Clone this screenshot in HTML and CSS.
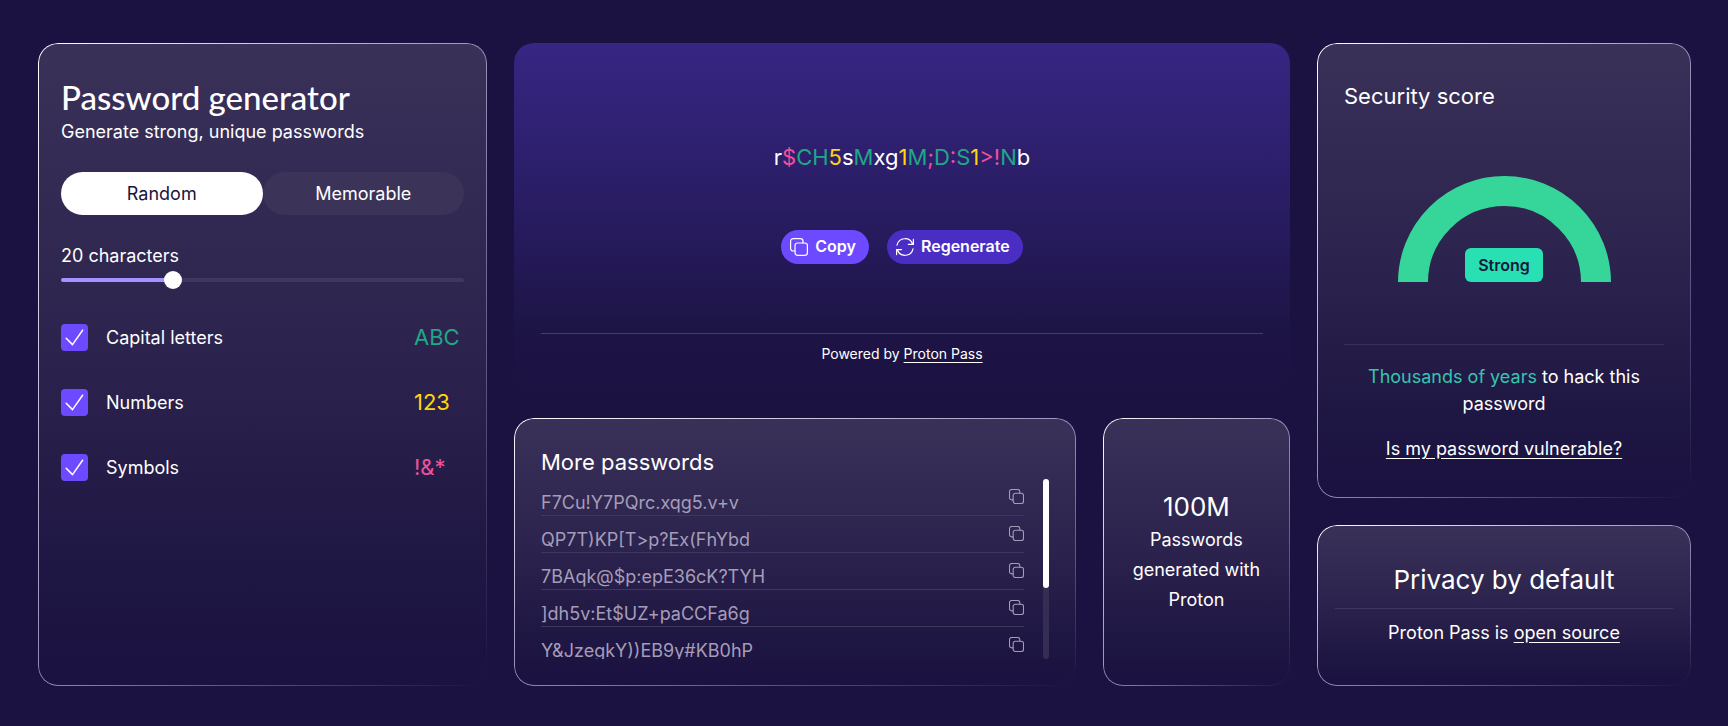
FILE: index.html
```html
<!DOCTYPE html>
<html lang="en">
<head>
    <meta charset="UTF-8">
    <meta name="viewport" content="width=device-width, initial-scale=1.0">
    <title>Password generator</title>
    <link rel="stylesheet" href="styles.css">
</head>
<body>
    <!-- shared icons -->
    <svg class="sprite" aria-hidden="true">
        <symbol id="icon-copy" viewBox="0 0 18 18">
            <rect x="5" y="5" width="12.4" height="12.4" rx="2.6"/>
            <path d="M5 13H3.2A2.6 2.6 0 0 1 .6 10.4V3.2A2.6 2.6 0 0 1 3.2.6h7.2A2.6 2.6 0 0 1 13 3.2V5"/>
        </symbol>
        <symbol id="icon-refresh" viewBox="0 0 18 18">
            <path d="M1 7.2A8.1 8.1 0 0 1 16.6 6.2M17.4 1.4v5h-5"/>
            <path d="M17 10.8A8.1 8.1 0 0 1 1.4 11.8M.6 16.6v-5h5"/>
        </symbol>
        <symbol id="icon-check" viewBox="0 0 27 27">
            <path d="M5.2 14.2l6.3 6.4L21.6 6.2"/>
        </symbol>
    </svg>

    <main class="layout">
        <section class="card settings">
            <h1>Password generator</h1>
            <p class="subtitle">Generate strong, unique passwords</p>

            <div class="tabs">
                <button type="button" class="tab active">Random</button>
                <button type="button" class="tab">Memorable</button>
            </div>

            <label class="length-label" for="length">20 characters</label>
            <input type="range" id="length" class="slider" min="4" max="64" value="20">

            <div class="options">
                <div class="option">
                    <input type="checkbox" id="capitals" checked>
                    <svg class="check"><use href="#icon-check"/></svg>
                    <label for="capitals">Capital letters</label>
                    <span class="sample upper">ABC</span>
                </div>
                <div class="option">
                    <input type="checkbox" id="numbers" checked>
                    <svg class="check"><use href="#icon-check"/></svg>
                    <label for="numbers">Numbers</label>
                    <span class="sample digit">123</span>
                </div>
                <div class="option">
                    <input type="checkbox" id="symbols" checked>
                    <svg class="check"><use href="#icon-check"/></svg>
                    <label for="symbols">Symbols</label>
                    <span class="sample symbol">!&amp;*</span>
                </div>
            </div>
        </section>

        <div class="column">
            <section class="result">
                <div class="result-main">
                    <p class="password">r<span class="symbol">$</span><span class="upper">CH</span><span class="digit">5</span>s<span class="upper">M</span>xg<span class="digit">1</span><span class="upper">M</span><span class="symbol">;</span><span class="upper">D</span><span class="symbol">:</span><span class="upper">S</span><span class="digit">1</span><span class="symbol">&gt;!</span><span class="upper">N</span>b</p>
                    <div class="actions">
                        <button type="button" class="btn primary"><svg class="icon"><use href="#icon-copy"/></svg>Copy</button>
                        <button type="button" class="btn"><svg class="icon"><use href="#icon-refresh"/></svg>Regenerate</button>
                    </div>
                </div>
                <p class="powered">Powered by <a href="#">Proton Pass</a></p>
            </section>

            <div class="bottom-row">
                <section class="card more">
                    <h2>More passwords</h2>
                    <div class="scroller">
                        <ul class="list">
                            <li><span>F7Cu!Y7PQrc.xqg5.v+v</span><button type="button" aria-label="Copy"><svg><use href="#icon-copy"/></svg></button></li>
                            <li><span>QP7T)KP[T&gt;p?Ex(FhYbd</span><button type="button" aria-label="Copy"><svg><use href="#icon-copy"/></svg></button></li>
                            <li><span>7BAqk@$p:epE36cK?TYH</span><button type="button" aria-label="Copy"><svg><use href="#icon-copy"/></svg></button></li>
                            <li><span>]dh5v:Et$UZ+paCCFa6g</span><button type="button" aria-label="Copy"><svg><use href="#icon-copy"/></svg></button></li>
                            <li><span>Y&amp;JzegkY))EB9y#KB0hP</span><button type="button" aria-label="Copy"><svg><use href="#icon-copy"/></svg></button></li>
                            <li></li>
                            <li></li>
                            <li></li>
                        </ul>
                        <div class="track"><div class="thumb"></div></div>
                    </div>
                </section>

                <section class="card stat">
                    <p class="big">100M</p>
                    <p class="stat-text">Passwords generated with Proton</p>
                </section>
            </div>
        </div>

        <div class="column">
            <section class="card security">
                <h2>Security score</h2>
                <div class="gauge">
                    <svg class="arc" viewBox="0 0 213 106"><path d="M15 106.5a91.5 91.5 0 0 1 183 0"/></svg>
                    <span class="badge">Strong</span>
                </div>
                <div class="verdict">
                    <p><span class="years">Thousands of years</span> to hack this password</p>
                    <a href="#">Is my password vulnerable?</a>
                </div>
            </section>

            <section class="card privacy">
                <h2 class="big">Privacy by default</h2>
                <p class="source">Proton Pass is <a href="#">open source</a></p>
            </section>
        </div>
    </main>

    <script>
        let slider = document.getElementById("length");
        let lengthLabel = document.querySelector(".length-label");
        let list = document.querySelector(".list");
        let thumb = document.querySelector(".thumb");

        function updateSlider() {
            let percent = (slider.value - slider.min) / (slider.max - slider.min) * 100;
            slider.style.setProperty("--fill", percent + "%");
            lengthLabel.textContent = slider.value + " characters";
        }

        function updateThumb() {
            thumb.style.height = list.clientHeight / list.scrollHeight * 100 + "%";
            thumb.style.marginTop = list.scrollTop / list.scrollHeight * list.clientHeight + "px";
        }

        slider.addEventListener("input", updateSlider);
        list.addEventListener("scroll", updateThumb);
        updateSlider();
        updateThumb();
    </script>
</body>
</html>
```
FILE: styles.css
```css
* {
    box-sizing: border-box;
}
body {
    margin: 0;
    background: #1b1242;
    color: #fff;
    font-family: Inter, sans-serif;
    font-size: 18px;
    line-height: 27px;
}
h1, h2, p, ul {
    margin: 0;
    padding: 0;
    font-weight: 400;
}
a {
    color: inherit;
    text-underline-offset: 3px;
}
button {
    border: none;
    color: inherit;
    font: inherit;
    cursor: pointer;
}
svg {
    fill: none;
    stroke: currentColor;
    stroke-linecap: round;
    stroke-linejoin: round;
}
.sprite {
    display: none;
}
.layout {
    display: grid;
    grid-template-columns: 449fr 776fr 374fr;
    gap: 27px;
    min-height: 100vh;
    padding: 43px 37px 40px 38px;
}
.column {
    display: flex;
    flex-direction: column;
    gap: 27px;
}
.card {
    position: relative;
    padding: 27px;
    border-radius: 20px;
    background: linear-gradient(#3a3159, #2b234d 50%, #1f1743 82%, #1b1241 95%);
}
/* fading gradient outline */
.card::before {
    content: "";
    position: absolute;
    inset: 0;
    padding: 1px;
    border-radius: 20px;
    background: linear-gradient(to bottom right, #fff, rgba(210, 198, 245, 0.65) 50%, rgba(200, 185, 240, 0));
    mask: linear-gradient(#000 0 0) content-box exclude, linear-gradient(#000 0 0);
    pointer-events: none;
}
h2 {
    font-size: 22px;
    line-height: 34px;
}
.big {
    font-size: 26px;
    line-height: 36px;
}
.upper {
    color: #1ea885;
}
.digit {
    color: #ffd60a;
}
.symbol {
    color: #f0509a;
}

/* settings */
.settings {
    padding: 34px 23px;
}
h1 {
    font-family: Lato, sans-serif;
    font-size: 33px;
    font-weight: 500;
    line-height: 41px;
}
.tabs {
    display: grid;
    grid-template-columns: 1fr 1fr;
    margin: 27px 0;
}
.tab {
    height: 43px;
    border-radius: 22px;
    background: #3c3359;
}
.tab.active {
    background: #fff;
    color: #1b1340;
}
.length-label {
    display: block;
}
.slider {
    display: block;
    appearance: none;
    width: 100%;
    height: 18px;
    margin: 2px 0 35px;
    background: none;
}
.slider::-webkit-slider-runnable-track {
    height: 4px;
    border-radius: 2px;
    background: linear-gradient(90deg, #a790ff var(--fill), #403760 var(--fill));
}
.slider::-webkit-slider-thumb {
    appearance: none;
    width: 18px;
    height: 18px;
    margin-top: -7px;
    border-radius: 50%;
    background: #fff;
}
.options {
    display: grid;
    gap: 38px;
}
.option {
    display: grid;
    grid-template-columns: 27px 1fr 50px;
    column-gap: 18px;
    align-items: center;
}
.option input {
    grid-area: 1 / 1;
    appearance: none;
    width: 27px;
    height: 27px;
    margin: 0;
    border-radius: 4px;
    background: #6d4aff;
}
.check {
    grid-area: 1 / 1;
    width: 27px;
    height: 27px;
    stroke-width: 1.5;
    pointer-events: none;
}
.option input:not(:checked) {
    background: #3c3359;
}
.option input:not(:checked) + .check {
    visibility: hidden;
}
.sample {
    font-size: 22px;
}

/* generated password */
.result {
    display: flex;
    flex: 1;
    flex-direction: column;
    padding: 27px;
    border-radius: 20px;
    background: linear-gradient(#372683, #281c61 50%, #1e1547 80%, #1b1242);
}
.result-main {
    display: flex;
    flex: 1;
    flex-direction: column;
    align-items: center;
    justify-content: center;
    gap: 56px;
}
.password {
    font-size: 22px;
    line-height: 34px;
}
.actions {
    display: flex;
    gap: 18px;
}
.btn {
    display: flex;
    align-items: center;
    gap: 7px;
    height: 34px;
    padding: 0 13px 0 9px;
    border-radius: 17px;
    background: #4a2ec4;
    font-size: 16px;
    font-weight: 600;
}
.btn.primary {
    background: #6d4aff;
}
.icon {
    width: 18px;
    height: 18px;
    stroke-width: 1.2;
}
.powered {
    padding-top: 9px;
    border-top: 1px solid #463c70;
    font-size: 14px;
    line-height: 21px;
    text-align: center;
}

/* more passwords */
.bottom-row {
    display: grid;
    grid-template-columns: 3fr 1fr;
    gap: 27px;
}
.scroller {
    display: grid;
    grid-template-columns: 1fr 6px;
    gap: 19px;
}
.list {
    height: 180px;
    overflow-y: auto;
    scrollbar-width: none;
    list-style: none;
    color: #a59db8;
}
.track {
    border-radius: 3px;
    background: #362d55;
}
.thumb {
    border-radius: 3px;
    background: #fff;
}
.list li {
    display: flex;
    justify-content: space-between;
    height: 37px;
    padding-top: 10px;
    border-bottom: 1px solid #40375f;
}
.list button {
    display: flex;
    width: 15px;
    height: 15px;
    padding: 0;
    background: none;
}
.list svg {
    width: 15px;
    height: 15px;
    stroke-width: 1.3;
}
.stat {
    display: flex;
    flex-direction: column;
    justify-content: center;
    text-align: center;
}
.stat-text {
    line-height: 30px;
}

/* security score */
.security {
    display: flex;
    flex: 1;
    flex-direction: column;
    padding-top: 36px;
}
.gauge {
    display: grid;
    flex: 1;
    align-content: center;
    justify-items: center;
    align-items: end;
}
.arc {
    grid-area: 1 / 1;
    width: 213px;
    height: 106px;
    stroke: #36d59a;
    stroke-width: 30;
    stroke-linecap: butt;
}
.badge {
    grid-area: 1 / 1;
    padding: 0 13px;
    border-radius: 6px;
    background: #29e0b4;
    color: #14173c;
    font-size: 16px;
    font-weight: 600;
    line-height: 34px;
}
.verdict {
    padding: 18px 20px 9px;
    border-top: 1px solid #393056;
    text-align: center;
}
.verdict p {
    margin-bottom: 18px;
}
.years {
    color: #35c4b0;
}
.privacy {
    padding: 37px 18px 36px;
    text-align: center;
}
.privacy h2 {
    padding-bottom: 10px;
    border-bottom: 1px solid #40375f;
}
.source {
    padding: 10px 0 4px;
}
```
